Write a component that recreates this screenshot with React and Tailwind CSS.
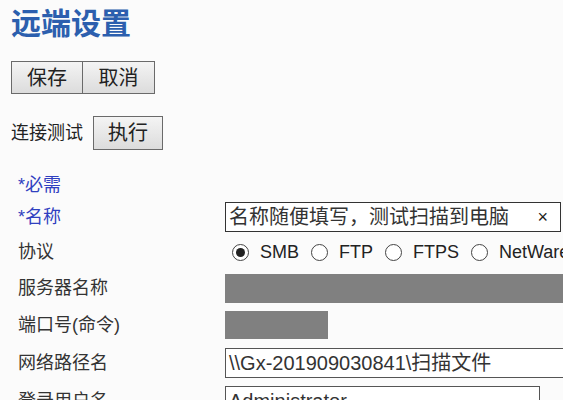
import React from "react";

const font = { fontFamily: '"Liberation Sans", Arial, "Noto Sans CJK SC", sans-serif' };

const Radio = ({ checked, label }) => (
  <div className="flex items-center">
    <span className="w-[17px] h-[17px] rounded-full border border-[#444] bg-white flex items-center justify-center">
      {checked && <span className="w-[9px] h-[9px] rounded-full bg-[#222]" />}
    </span>
    <span className="ml-[11px] mr-[12px] text-[18px] text-[#222]">{label}</span>
  </div>
);

const Row = ({ label, h, blue, children }) => (
  <div className={`flex items-center ${h}`}>
    <div className={`w-[207px] shrink-0 text-[18px] ${blue ? "text-[#3040c0]" : "text-[#333]"}`}>{label}</div>
    <div className="flex-1 flex items-center min-w-0">{children}</div>
  </div>
);

export default function App() {
  return (
    <div className="w-[563px] h-[400px] overflow-hidden bg-[#fbfbfb] pl-[11px]" style={font}>
      <h1 className="pt-[6px] text-[30px] leading-[36px] font-bold text-[#2c5fae]">远端设置</h1>
      <div className="flex mt-[19px]">
        <button className="w-[72px] h-[33px] border border-[#6a6a6a] bg-gradient-to-b from-[#f4f4f4] to-[#dcdcdc] text-[20px] text-[#222]">保存</button>
        <button className="w-[72px] h-[33px] border border-l-0 border-[#6a6a6a] bg-gradient-to-b from-[#f4f4f4] to-[#dcdcdc] text-[20px] text-[#222]">取消</button>
      </div>
      <div className="flex items-center mt-[22px]">
        <span className="text-[18px] text-[#222]">连接测试</span>
        <button className="ml-[10px] w-[70px] h-[34px] border border-[#6a6a6a] bg-gradient-to-b from-[#f4f4f4] to-[#dcdcdc] text-[20px] text-[#222]">执行</button>
      </div>
      <div className="mt-[20px] pl-[7px] -mr-[40px]">
        <Row label="*必需" h="h-[30px]" blue />
        <Row label="*名称" h="h-[34px]" blue>
          <div className="w-[336px] h-[30px] border border-[#333] bg-white flex items-center px-[3px]">
            <span className="text-[20px] text-[#333] flex-1">名称随便填写，测试扫描到电脑</span>
            <span className="text-[18px] text-[#222] mr-[9px]">×</span>
          </div>
        </Row>
        <Row label="协议" h="h-[37px]">
          <div className="pl-[7px] flex whitespace-nowrap">
            <Radio checked label="SMB" />
            <Radio label="FTP" />
            <Radio label="FTPS" />
            <Radio label="NetWare" />
          </div>
        </Row>
        <Row label="服务器名称" h="h-[35px]">
          <div className="w-[380px] h-[29px] bg-[#808080]" />
        </Row>
        <Row label="端口号(命令)" h="h-[38px]">
          <div className="w-[103px] h-[28px] bg-[#808080]" />
        </Row>
        <Row label="网络路径名" h="h-[38px]">
          <div className="w-[380px] h-[30px] border border-[#555] bg-white flex items-center px-[3px] text-[20px] text-[#333]">\\Gx-201909030841\扫描文件</div>
        </Row>
        <Row label="登录用户名" h="h-[38px]">
          <div className="w-[315px] h-[30px] border border-[#555] bg-white flex items-center px-[3px] text-[20px] text-[#333]">Administrator</div>
        </Row>
      </div>
    </div>
  );
}
